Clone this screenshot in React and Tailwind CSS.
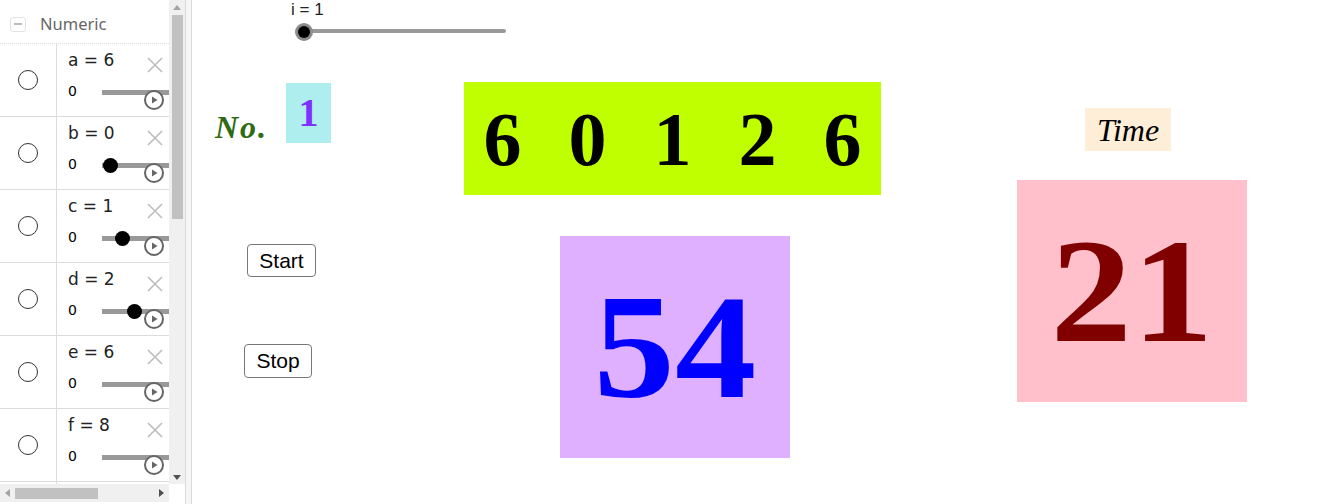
const rows = [
  { name: 'a', value: 6 },
  { name: 'b', value: 0 },
  { name: 'c', value: 1 },
  { name: 'd', value: 2 },
  { name: 'e', value: 6 },
  { name: 'f', value: 8 },
];

function PlayButton() {
  return (
    <svg width="22" height="22" viewBox="0 0 22 22" className="absolute left-[86px] top-[45px]">
      <circle cx="11" cy="11" r="9" fill="white" stroke="#666" strokeWidth="2" />
      <path d="M9 7.5 L14.5 11 L9 14.5 Z" fill="#666" />
    </svg>
  );
}

function CloseIcon() {
  return (
    <svg width="18" height="18" viewBox="0 0 18 18" className="absolute left-[89px] top-[12px]">
      <path d="M2 2 L16 16 M16 2 L2 16" stroke="#bdbdbd" strokeWidth="1.6" />
    </svg>
  );
}

function SliderRow({ name, value }) {
  // slider min 0, roughly 12.3px per step
  const dotLeft = 53 + value * 12.3;
  return (
    <div className="flex h-[73px] shrink-0 border-b border-[#dcdcdc]">
      <div className="flex w-[57px] shrink-0 items-center justify-center border-r border-[#dcdcdc]">
        <div className="h-[20px] w-[20px] rounded-full border border-[#333]" />
      </div>
      <div className="relative flex-1 font-['DejaVu_Sans',sans-serif]">
        <p className="absolute left-[11px] top-[4px] text-[17px] leading-[24px] text-[#222]">
          {name} = {value}
        </p>
        <CloseIcon />
        <span className="absolute left-[11px] top-[37px] text-[14px] leading-[20px] text-black">0</span>
        <div className="absolute left-[45px] right-0 top-[46px] h-[5px] bg-[#999]" />
        {value < 10 && (
          <div
            className="absolute top-[41px] h-[15px] w-[15px] rounded-full bg-black"
            style={{ left: dotLeft - 7.5 }}
          />
        )}
        <PlayButton />
      </div>
    </div>
  );
}

function Sidebar() {
  return (
    <aside className="flex w-[185px] shrink-0 flex-col font-['Noto_Sans',sans-serif]">
      <div className="flex h-[484px]">
        <div className="flex w-[169px] flex-col overflow-hidden">
          <div className="flex h-[44px] shrink-0 items-center gap-[14px] border-b border-dotted border-[#ddd] pl-[10px] pt-[5px]">
            <div className="flex h-[15px] w-[16px] items-center justify-center rounded-[3px] border border-[#e2e2e2]">
              <div className="h-[1.5px] w-[8px] bg-[#bbb]" />
            </div>
            <span className="text-[16.5px] text-[#666]">Numeric</span>
          </div>
          {rows.map((r) => (
            <SliderRow key={r.name} {...r} />
          ))}
          <div className="flex flex-1">
            <div className="w-[57px] border-r border-[#dcdcdc]" />
          </div>
        </div>
        <div className="flex w-[16px] flex-col items-center bg-[#f0f0f0]">
          <svg width="8" height="5" viewBox="0 0 8 5" className="mt-[5px]">
            <path d="M0 5 L4 0 L8 5 Z" fill="#a3a3a3" />
          </svg>
          <div className="mt-[5px] h-[204px] w-[11px] bg-[#c1c1c1]" />
          <div className="flex-1" />
          <svg width="8" height="5" viewBox="0 0 8 5" className="mb-[4px]">
            <path d="M0 0 L8 0 L4 5 Z" fill="#505050" />
          </svg>
        </div>
      </div>
      <div className="flex h-[18px]">
        <div className="flex w-[169px] items-center bg-[#f0f0f0] px-[5px]">
          <svg width="5" height="8" viewBox="0 0 5 8">
            <path d="M5 0 L0 4 L5 8 Z" fill="#a3a3a3" />
          </svg>
          <div className="ml-[5px] h-[11px] w-[83px] bg-[#c1c1c1]" />
          <div className="flex-1" />
          <svg width="5" height="8" viewBox="0 0 5 8">
            <path d="M0 0 L5 4 L0 8 Z" fill="#505050" />
          </svg>
        </div>
      </div>
    </aside>
  );
}

function Canvas() {
  const digits = [6, 0, 1, 2, 6];
  return (
    <main className="relative flex-1 bg-white font-['Liberation_Serif',serif]">
      {/* slider i */}
      <span className="absolute left-[99px] top-[0px] font-['Liberation_Sans',sans-serif] text-[17px] leading-[20px] text-[#222]">
        i = 1
      </span>
      <div className="absolute left-[108px] top-[29px] h-[4px] w-[206px] rounded-full bg-[#999]" />
      <div className="absolute left-[103px] top-[23px] flex h-[18px] w-[18px] items-center justify-center rounded-full bg-[#8c8c8c]">
        <div className="h-[12px] w-[12px] rounded-full bg-black" />
      </div>

      {/* No. */}
      <div className="absolute left-[23px] top-[106px] flex h-[42px] items-center text-[32px] font-bold italic tracking-[2px] text-[#2f6b11]">
        No.
      </div>
      <div className="absolute left-[94px] top-[83px] flex h-[60px] w-[45px] items-center justify-center bg-[#afeeee] text-[40px] font-bold leading-none text-[#7f30ff]">
        1
      </div>

      {/* digits */}
      <div className="absolute left-[272px] top-[82px] flex h-[113px] w-[417px] items-center justify-center gap-[47px] bg-[#c0ff00] text-[76px] font-bold leading-none text-black">
        {digits.map((d, i) => (
          <span key={i}>{d}</span>
        ))}
      </div>

      {/* buttons */}
      <button className="absolute left-[55px] top-[244px] flex h-[33px] w-[69px] items-center justify-center rounded-[4px] border border-[#777] bg-white font-['Liberation_Sans',sans-serif] text-[21px] text-black">
        Start
      </button>
      <button className="absolute left-[52px] top-[344px] flex h-[34px] w-[68px] items-center justify-center rounded-[4px] border border-[#777] bg-white font-['Liberation_Sans',sans-serif] text-[21px] text-black">
        Stop
      </button>

      {/* score */}
      <div className="absolute left-[368px] top-[236px] flex h-[222px] w-[230px] items-center justify-center bg-[#dfb0ff] text-[148px] font-bold leading-none text-[#0000ff]">
        <span className="scale-x-110">54</span>
      </div>

      {/* time */}
      <div className="absolute left-[893px] top-[108px] flex h-[43px] w-[86px] items-center justify-center bg-[#ffeed7] text-[32px] italic leading-none text-black">
        Time
      </div>
      <div className="absolute left-[825px] top-[180px] flex h-[222px] w-[230px] items-center justify-center bg-[#ffc0cb] text-[148px] font-bold leading-none text-[#800000]">
        <span className="scale-x-110">21</span>
      </div>
    </main>
  );
}

export default function App() {
  return (
    <div className="flex h-[504px] w-[1336px] overflow-hidden bg-white">
      <Sidebar />
      <div className="w-[7px] shrink-0 border-x border-[#dadada] bg-[#f6f6f6]" />
      <Canvas />
    </div>
  );
}
